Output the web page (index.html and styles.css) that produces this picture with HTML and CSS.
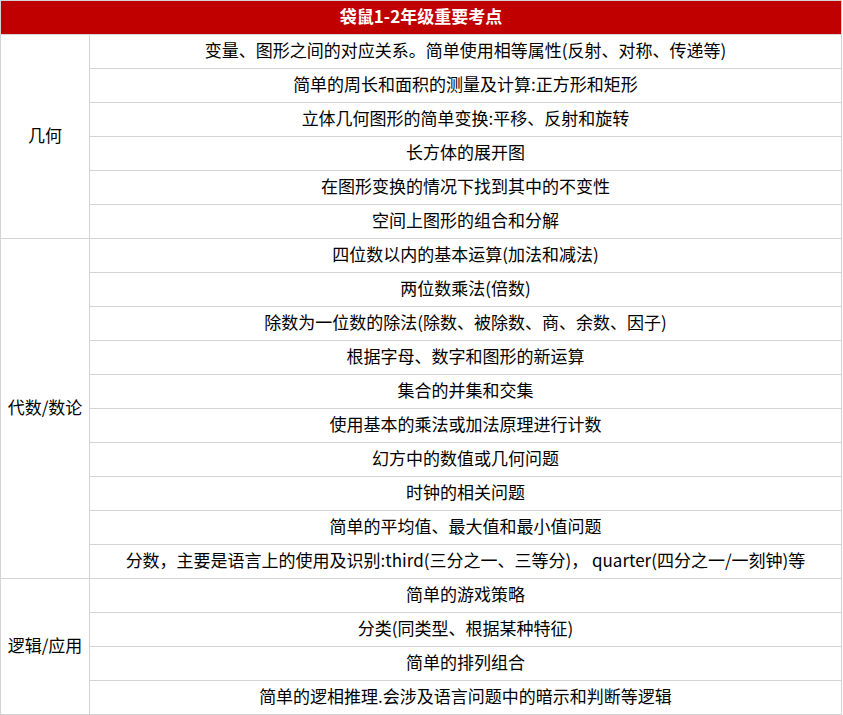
FILE: index.html
```html
<!DOCTYPE html>
<html lang="zh">
<head>
<meta charset="utf-8">
<title>袋鼠1-2年级重要考点</title>
<link rel="stylesheet" href="styles.css">
</head>
<body>
<table class="topics">
  <colgroup><col class="col-cat"><col class="col-item"></colgroup>
  <thead>
    <tr><th colspan="2" class="title">袋鼠1-2年级重要考点</th></tr>
  </thead>
  <tbody>
    <tr><td class="cat" rowspan="6">几何</td><td>变量、图形之间的对应关系。简单使用相等属性(反射、对称、传递等)</td></tr>
    <tr><td>简单的周长和面积的测量及计算:正方形和矩形</td></tr>
    <tr><td>立体几何图形的简单变换:平移、反射和旋转</td></tr>
    <tr><td>长方体的展开图</td></tr>
    <tr><td>在图形变换的情况下找到其中的不变性</td></tr>
    <tr><td>空间上图形的组合和分解</td></tr>
    <tr><td class="cat" rowspan="10">代数/数论</td><td>四位数以内的基本运算(加法和减法)</td></tr>
    <tr><td>两位数乘法(倍数)</td></tr>
    <tr><td>除数为一位数的除法(除数、被除数、商、余数、因子)</td></tr>
    <tr><td>根据字母、数字和图形的新运算</td></tr>
    <tr><td>集合的并集和交集</td></tr>
    <tr><td>使用基本的乘法或加法原理进行计数</td></tr>
    <tr><td>幻方中的数值或几何问题</td></tr>
    <tr><td>时钟的相关问题</td></tr>
    <tr><td>简单的平均值、最大值和最小值问题</td></tr>
    <tr><td>分数，主要是语言上的使用及识别:third(三分之一、三等分)， quarter(四分之一/一刻钟)等</td></tr>
    <tr><td class="cat" rowspan="4">逻辑/应用</td><td>简单的游戏策略</td></tr>
    <tr><td>分类(同类型、根据某种特征)</td></tr>
    <tr><td>简单的排列组合</td></tr>
    <tr><td>简单的逻相推理.会涉及语言问题中的暗示和判断等逻辑</td></tr>
  </tbody>
</table>
</body>
</html>
```
FILE: styles.css
```css
html, body {
  margin: 0;
  padding: 0;
  background: #ffffff;
}
body {
  font-family: "Microsoft YaHei", "Noto Sans CJK SC", "Noto Sans", sans-serif;
  font-size: 17px;
  color: #000000;
}
.topics {
  border-collapse: collapse;
  width: 842px;
  table-layout: fixed;
}
.col-cat { width: 89px; }
.topics th,
.topics td {
  border: 1px solid #d4d4d4;
  padding: 0 0 3px 0;
  height: 30px;
  line-height: 20px;
  text-align: center;
  vertical-align: middle;
  white-space: nowrap;
}
.title {
  background: #c00000;
  color: #ffffff;
  font-weight: bold;
}
.cat {
  font-weight: normal;
}
```
